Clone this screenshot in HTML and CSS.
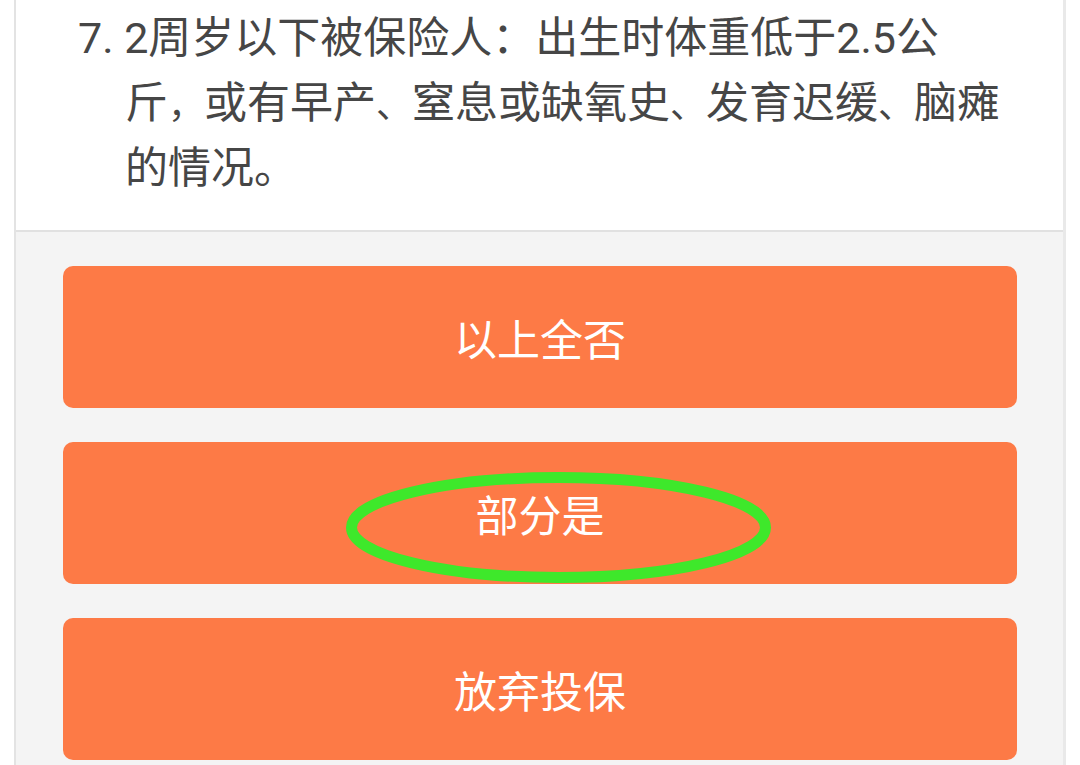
FILE: index.html
```html
<!DOCTYPE html>
<html lang="zh-CN">
<head>
<meta charset="utf-8">
<title>健康告知</title>
<link rel="stylesheet" href="styles.css">
</head>
<body>
<div class="panel">
  <section class="question">
    <p class="item">7. 2周岁以下被保险人：出生时体重低于2.5公斤<span class="punct">，</span>或有早产<span class="punct">、</span>窒息或缺氧史<span class="punct">、</span>发育迟缓<span class="punct">、</span>脑瘫的情况。</p>
  </section>
  <section class="actions">
    <button class="btn" type="button">以上全否</button>
    <button class="btn btn-marked" type="button">部分是
      <svg class="mark" viewBox="0 0 427 111" aria-hidden="true">
        <ellipse cx="213.5" cy="55.5" rx="207" ry="50" fill="none" stroke="#3ee82b" stroke-width="11"/>
      </svg>
    </button>
    <button class="btn" type="button">放弃投保</button>
  </section>
</div>
</body>
</html>
```
FILE: styles.css
```css
html, body {
  margin: 0;
  padding: 0;
  background: #ffffff;
  height: 100%;
  overflow: hidden;
}
body {
  font-family: Roboto, "Noto Sans CJK SC", sans-serif;
}
.panel {
  margin-left: 14px;
  width: 1047px;
  border-left: 2px solid #e3e3e3;
  border-right: 3px solid #e9e9e9;
  background: #f4f4f4;
  min-height: 100%;
}
.question {
  background: #ffffff;
  padding: 6px 58px 29px 109px;
  border-bottom: 2px solid #e1e1e1;
}
.item {
  margin: 0;
  font-size: 43px;
  line-height: 65px;
  color: #464646;
  text-indent: -47px;
}
.punct {
  font-size: 36px;
  line-height: 1;
}
.actions {
  display: flex;
  flex-direction: column;
  gap: 34px;
  padding: 34px 46px 0 47px;
}
.btn {
  position: relative;
  height: 142px;
  border: none;
  border-radius: 10px;
  background: #fd7a46;
  color: #ffffff;
  font-family: Roboto, "Noto Sans CJK SC", sans-serif;
  font-size: 43px;
  padding: 0;
}
.mark {
  position: absolute;
  left: 282px;
  top: 30px;
  width: 427px;
  height: 111px;
}
```
